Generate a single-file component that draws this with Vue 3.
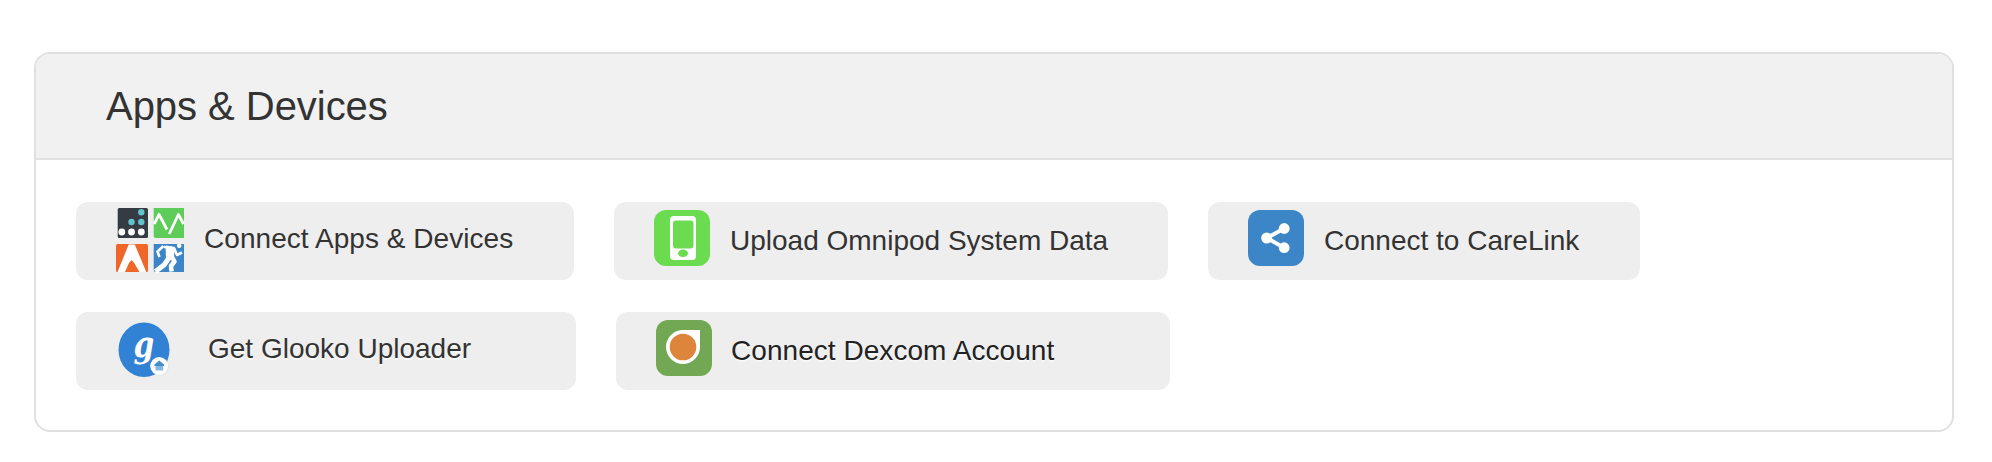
<template>
  <section class="devices-panel">
    <header class="devices-panel__header">
      <h2 class="devices-panel__title">Apps &amp; Devices</h2>
    </header>

    <div class="devices-panel__body">
      <button
        v-for="action in actions"
        :key="action.id"
        type="button"
        class="device-action"
        :class="`device-action--${action.id}`"
      >
        <svg v-if="action.id === 'apps'" class="device-action__icon" width="68" height="64" viewBox="0 0 68 64">
          <rect x="1.7" width="30.3" height="30" rx="1.5" fill="#343b43" />
          <g fill="#62c3c8">
            <circle cx="25.3" cy="4.3" r="3.2" />
            <circle cx="15.5" cy="14" r="3.2" />
            <circle cx="25.3" cy="14" r="3.2" />
          </g>
          <g fill="#fff">
            <circle cx="5.8" cy="24" r="3.4" />
            <circle cx="15.5" cy="24" r="3.4" />
            <circle cx="25.3" cy="24" r="3.4" />
          </g>
          <path d="M37.7 0H68v30H40q-2.3 0-2.3-2.3z" fill="#5dcc59" />
          <path
            d="M38.2 16L43 6.5L47.300 14.500L51 21.500M53.200 26L62.400 6.500L67.500 16"
            fill="none"
            stroke="#fff"
            stroke-width="2.8"
            stroke-linejoin="round"
          />
          <rect y="36" width="32" height="28" rx="1.5" fill="#f06528" />
          <path d="M1.500 64L12.700 36.500H18.800L30.300 64H23.500L18.200 55L15.600 52L13 55L9 64z" fill="#fff" />
          <path d="M37.700 36H68V64H40q-2.300 0-2.300-2.300z" fill="#3c86c8" />
          <g fill="none" stroke="#fff" stroke-linejoin="round">
            <circle cx="63.200" cy="37.800" r="2.300" fill="#fff" stroke="none" />
            <path d="M48 39L58 40L61 47L66 44.500" stroke-width="2.600" />
            <path d="M47.500 38L41.500 43.500L43.500 49" stroke-width="2.600" />
            <path d="M50.500 38.500L57.500 40L57 50L51 51z" fill="#fff" stroke-width="2" />
            <path d="M53 50L48 57L39.500 63.500" stroke-width="5" />
            <path d="M56 49L58.500 53.500L55 58L55.500 63.500" stroke-width="4.500" />
          </g>
        </svg>

        <svg v-else-if="action.id === 'omnipod'" class="device-action__icon" width="56" height="56" viewBox="0 0 56 56">
          <rect width="56" height="56" rx="12" fill="#6bdb4f" />
          <rect x="16" y="6" width="26" height="44" rx="4" fill="#fff" />
          <rect x="19" y="10.500" width="20.500" height="28" rx="3" fill="#6bdb4f" />
          <ellipse cx="29" cy="43.300" rx="5" ry="3.700" fill="#6bdb4f" />
        </svg>

        <svg v-else-if="action.id === 'carelink'" class="device-action__icon" width="56" height="56" viewBox="0 0 56 56">
          <rect width="56" height="56" rx="12" fill="#3c86c8" />
          <path d="M36.200 18.500L18.700 28L36.200 37.700" fill="none" stroke="#fff" stroke-width="4" />
          <g fill="#fff">
            <circle cx="18.700" cy="28" r="5.500" />
            <circle cx="36.200" cy="18.500" r="5.400" />
            <circle cx="36.200" cy="37.700" r="5.400" />
          </g>
        </svg>

        <svg v-else-if="action.id === 'uploader'" class="device-action__icon" width="72" height="56" viewBox="0 0 72 56">
          <ellipse cx="28" cy="29.700" rx="25.500" ry="27.300" fill="#3182d5" />
          <text class="glooko-letter" transform="translate(17.500 36.500) scale(.82 1)">g</text>
          <circle cx="43.700" cy="46.700" r="9" fill="#d3d5d8" opacity=".6" />
          <circle cx="43.200" cy="46" r="9" fill="#fff" />
          <path d="M43.200 40.500L48 44.500V46H38.500V44.500z" fill="#448dcc" />
          <path d="M39.500 46H47.200V50.500H39.500z" fill="#86b8e2" />
        </svg>

        <svg v-else class="device-action__icon" width="56" height="56" viewBox="0 0 56 56">
          <rect width="56" height="56" rx="12" fill="#72a853" />
          <path d="M44 10V27A17 17 0 1 1 27 10z" fill="#fff" />
          <circle cx="27" cy="27" r="13.300" fill="#dd853b" />
        </svg>

        <span class="device-action__label">{{ action.label }}</span>
      </button>
    </div>
  </section>
</template>

<script setup>
const actions = [
  { id: 'apps', label: 'Connect Apps & Devices' },
  { id: 'omnipod', label: 'Upload Omnipod System Data' },
  { id: 'carelink', label: 'Connect to CareLink' },
  { id: 'uploader', label: 'Get Glooko Uploader' },
  { id: 'dexcom', label: 'Connect Dexcom Account' },
]
</script>

<style>
body {
  margin: 0;
  background: #fff;
}
</style>

<style scoped>
.devices-panel {
  box-sizing: border-box;
  width: 1920px;
  height: 380px;
  margin: 52px 0 0 34px;
  overflow: hidden;
  border: 2px solid #e0e0e0;
  border-radius: 16px;
  color: #333;
  font-family: "Liberation Sans", Arial, sans-serif;
}

.devices-panel__header {
  box-sizing: border-box;
  height: 106px;
  padding: 0 70px;
  border-bottom: 2px solid #e0e0e0;
  background: #f1f1f1;
}

.devices-panel__title {
  margin: 0;
  font-size: 40px;
  font-weight: 400;
  letter-spacing: -0.04px;
  line-height: 104px;
}

.devices-panel__body {
  display: flex;
  flex-wrap: wrap;
  gap: 32px 40px;
  padding: 42px 40px;
}

.device-action {
  display: flex;
  box-sizing: border-box;
  align-items: flex-start;
  gap: 20px;
  height: 78px;
  padding: 8px 0 0 40px;
  border: 0;
  border-radius: 12px;
  background: #eee;
  color: #333;
  cursor: pointer;
  font: inherit;
  font-size: 28px;
}

.device-action--apps {
  width: 498px;
  padding-top: 6px;
  letter-spacing: 0.05px;
}

.device-action--omnipod {
  width: 554px;
}

.device-action--carelink {
  width: 432px;
}

.device-action--uploader {
  width: 500px;
}

.device-action--dexcom {
  width: 554px;
  gap: 19px;
  color: #222;
  letter-spacing: 0.05px;
}

.device-action__icon {
  display: block;
  flex: none;
  overflow: visible;
}

.device-action__label {
  line-height: 62px;
  white-space: nowrap;
}

.device-action--uploader .device-action__label {
  line-height: 58px;
}

.device-action--uploader .device-action__label,
.device-action--dexcom .device-action__label {
  text-shadow: 0 2px 0 #f8f8f8;
}

.glooko-letter {
  fill: #fff;
  font-family: "DejaVu Serif", serif;
  font-size: 36px;
  font-style: italic;
  font-weight: 700;
}
</style>
